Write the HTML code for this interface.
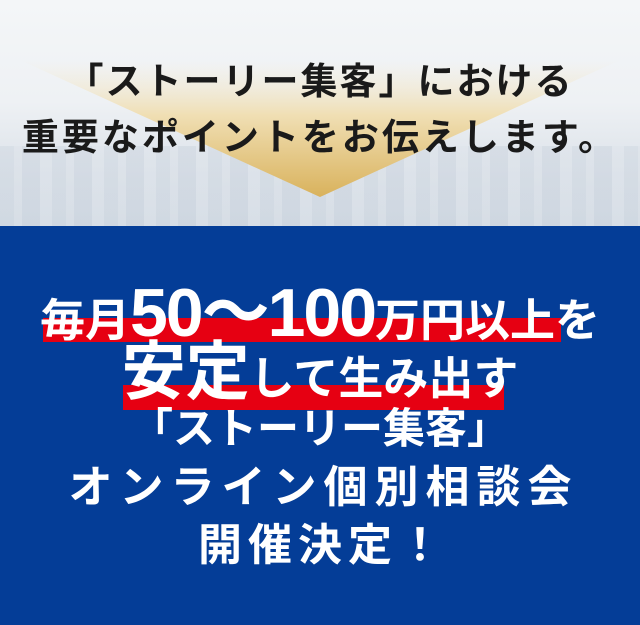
<!DOCTYPE html>
<html><head><meta charset="utf-8"><style>
*{margin:0;padding:0}
body{width:640px;height:625px;overflow:hidden;position:relative;font-family:"Liberation Sans","Noto Sans CJK JP",sans-serif;font-weight:700}
.top{position:absolute;left:0;top:0;width:640px;height:226px;background:linear-gradient(#f4f6f8 0%,#eef1f4 45%,#dde3ea 75%,#d3dbe4 100%)}
.city{position:absolute;left:0;bottom:0;width:640px;height:80px;background:repeating-linear-gradient(90deg,#ccd5df 0 14px,#dbe1e8 14px 22px,#c8d1dc 22px 40px,#dde3ea 40px 52px);opacity:.45}
.blue{position:absolute;left:0;top:226px;width:640px;height:399px;background:#043d97}
.l{position:absolute;left:0;width:640px;text-align:center;white-space:nowrap}
.bk{color:#1a1a1a;font-size:37px;letter-spacing:2px}
.w{color:#fff}
.red{position:absolute;background:#e60012}
</style></head><body>
<div class="top"><div class="city"></div>
<svg width="640" height="226" style="position:absolute;left:0;top:0">
<defs><linearGradient id="g" x1="0" y1="0" x2="0" y2="1"><stop offset="0" stop-color="#f5ecd6" stop-opacity="0"/><stop offset=".4" stop-color="#f0dfb4"/><stop offset="1" stop-color="#d9b25c"/></linearGradient></defs>
<polygon points="20,60 620,60 320,197" fill="url(#g)"/>
</svg></div>
<div class="l bk" style="top:51px">「ストーリー集客」における</div>
<div class="l bk" style="top:107px;letter-spacing:3px">重要なポイントをお伝えします。</div>
<div class="blue"></div>
<div class="red" style="left:43px;top:318px;width:518px;height:24px"></div>
<div class="red" style="left:123px;top:385px;width:381px;height:25px"></div>
<div class="l w" style="top:276px;font-size:45px;line-height:74px"><span>毎月</span><span style="font-size:68px;letter-spacing:-2px">50〜100</span><span>万円以上を</span></div>
<div class="l w" style="top:336px;font-size:45px;line-height:72px"><span style="font-size:64px">安定</span>して生み出す</div>
<div class="l w" style="top:401px;font-size:42px;line-height:56px">「ストーリー集客」</div>
<div class="l w" style="top:460px;font-size:44px;line-height:56px;letter-spacing:7px;text-indent:7px">オンライン個別相談会</div>
<div class="l w" style="top:518px;font-size:44px;line-height:56px;letter-spacing:6px;text-indent:6px">開催決定！</div>
</body></html>
